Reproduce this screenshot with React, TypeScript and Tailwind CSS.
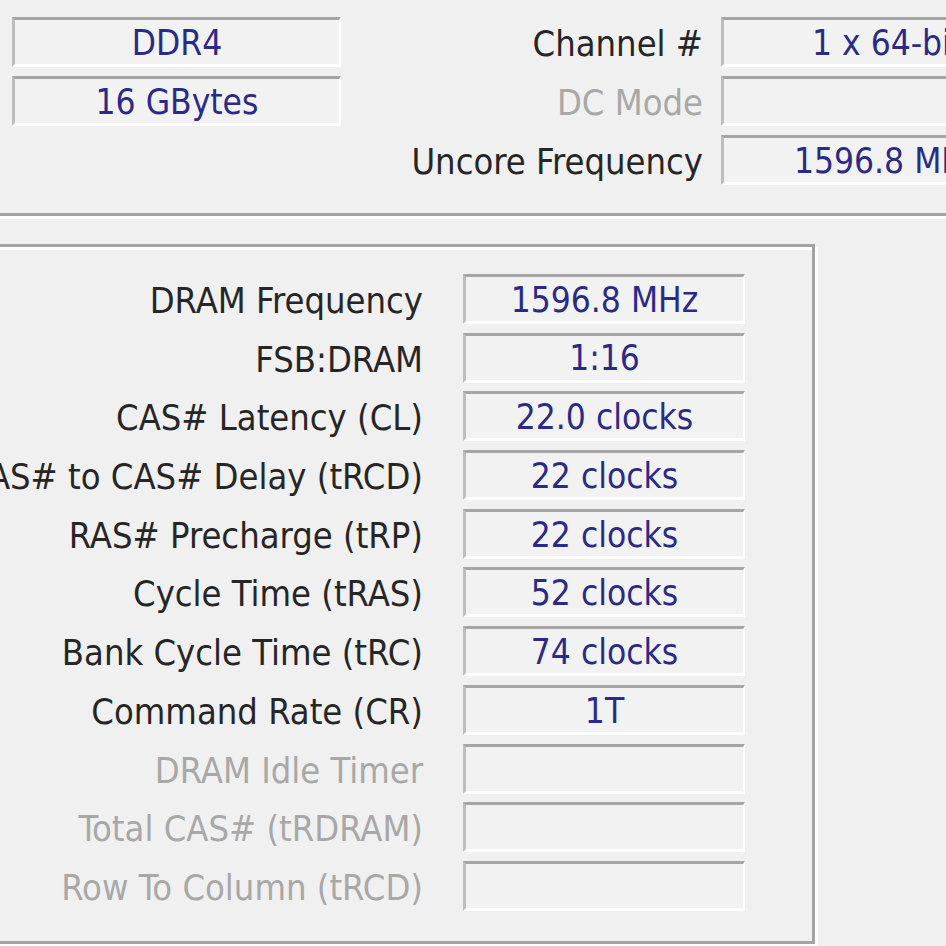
const font = { fontFamily: '"DejaVu Sans Condensed", "DejaVu Sans", Tahoma, sans-serif' };

interface Row {
  label: string;
  value?: string;
  disabled?: boolean;
}

const timings: Row[] = [
  { label: "DRAM Frequency", value: "1596.8 MHz" },
  { label: "FSB:DRAM", value: "1:16" },
  { label: "CAS# Latency (CL)", value: "22.0 clocks" },
  { label: "RAS# to CAS# Delay (tRCD)", value: "22 clocks" },
  { label: "RAS# Precharge (tRP)", value: "22 clocks" },
  { label: "Cycle Time (tRAS)", value: "52 clocks" },
  { label: "Bank Cycle Time (tRC)", value: "74 clocks" },
  { label: "Command Rate (CR)", value: "1T" },
  { label: "DRAM Idle Timer", disabled: true },
  { label: "Total CAS# (tRDRAM)", disabled: true },
  { label: "Row To Column (tRCD)", disabled: true },
];

function Field({ value, className = "" }: { value?: string; className?: string }) {
  return (
    <div
      className={`flex h-[50px] items-center justify-center border-t-[3px] border-l-[3px] border-r-[2px] border-b-[3px] border-t-[#a5a5a5] border-l-[#bdbdbd] border-r-white border-b-white bg-[#f2f2f2] pt-[2px] text-[35px] whitespace-nowrap text-[#2a2a88] ${className}`}
    >
      {value}
    </div>
  );
}

function Label({ text, disabled }: { text: string; disabled?: boolean }) {
  return (
    <div
      className={`flex h-[50px] items-center justify-end pt-[4px] whitespace-nowrap text-[36px] ${
        disabled ? "text-[#a8a8a8]" : "text-[#262626]"
      }`}
    >
      {text}
    </div>
  );
}

export default function App() {
  return (
    <div className="relative h-[946px] w-[946px] overflow-hidden bg-[#f0f0f0]" style={font}>
      {/* general group */}
      <div className="-ml-[20px] h-[216px] w-[1100px] border-b-[3px] border-[#a3a3a3] pt-[17px] pl-[32px] shadow-[0_3px_0_#ffffff]">
        <div className="grid grid-cols-[329px_380px_320px] gap-y-[9px]">
          <Field value="DDR4" />
          <div className="pr-[18px]">
            <Label text="Channel #" />
          </div>
          <Field value="1 x 64-bit" className="justify-start pl-[88px]" />

          <Field value="16 GBytes" />
          <div className="pr-[18px]">
            <Label text="DC Mode" disabled />
          </div>
          <Field />

          <div />
          <div className="pr-[18px]">
            <Label text="Uncore Frequency" />
          </div>
          <Field value="1596.8 MHz" className="justify-start pl-[70px]" />
        </div>
      </div>

      {/* timings group */}
      <div className="-ml-[20px] mt-[28px] h-[700px] w-[835px] border-[3px] border-[#a3a3a3] shadow-[inset_3px_3px_0_#ffffff,3px_3px_0_#ffffff] pt-[27px]">
        <div className="grid grid-cols-[440px_282px] gap-x-[40px] gap-y-[8.7px]">
          {timings.map((row) => (
            <div key={row.label} className="contents">
              <Label text={row.label} disabled={row.disabled} />
              <Field value={row.value} />
            </div>
          ))}
        </div>
      </div>
    </div>
  );
}
